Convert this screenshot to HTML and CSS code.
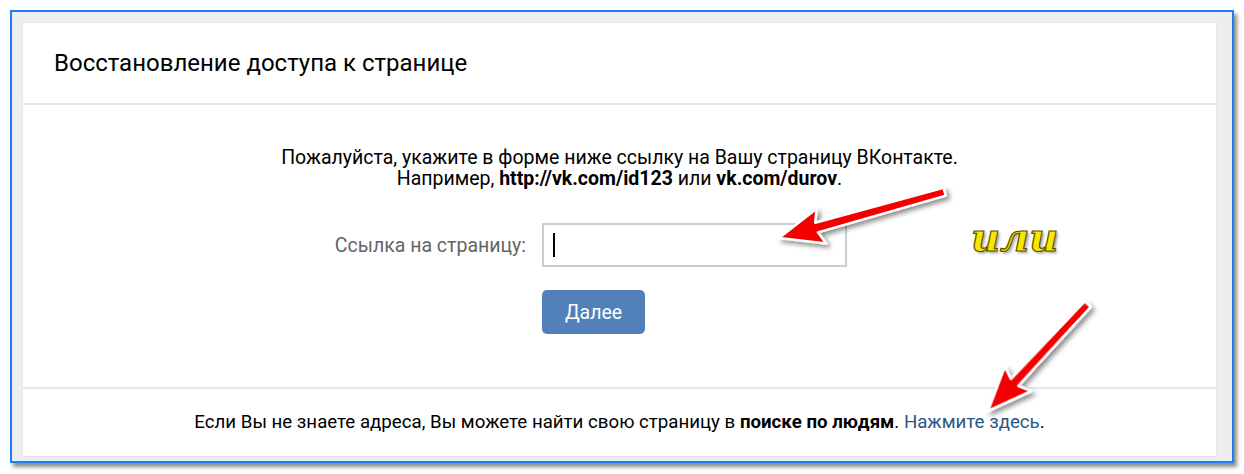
FILE: index.html
```html
<!DOCTYPE html>
<html lang="ru">
<head>
<meta charset="utf-8">
<link rel="stylesheet" href="styles.css">
</head>
<body>
<div class="page">
  <div class="frame">
    <div class="card">
      <div class="card-head">Восстановление доступа к странице</div>
      <div class="card-body">
        <p class="intro">Пожалуйста, укажите в форме ниже ссылку на Вашу страницу ВКонтакте.<br>Например, <b>http://vk.com/id123</b> или <b>vk.com/durov</b>.</p>
        <div class="form">
          <label class="label">Ссылка на страницу:</label>
          <div class="input"><span class="caret"></span></div>
          <div class="btn-cell"><button class="btn">Далее</button></div>
        </div>
      </div>
      <div class="card-foot">Если Вы не знаете адреса, Вы можете найти свою страницу в&nbsp;<b>поиске по людям</b>.&nbsp;<a class="link">Нажмите здесь</a>.</div>
    </div>
  </div>
  <div class="ili">или</div>
  <svg class="arrows" width="1244" height="474" viewBox="0 0 1244 474">
    <defs>
      <filter id="sh" x="-20%" y="-20%" width="140%" height="140%">
        <feDropShadow dx="3" dy="3" stdDeviation="2.5" flood-color="#000" flood-opacity="0.45"/>
      </filter>
    </defs>
    <g filter="url(#sh)">
      <polygon transform="translate(779,238) rotate(-15.6)" points="0,0 44,-18 39,-5 172,-4 172,4 39,5 44,18" fill="#f40000" stroke="#fff" stroke-width="2.5" stroke-linejoin="round"/>
      <polygon transform="translate(988,411) rotate(-47)" points="0,0 44,-18 39,-5 146,-4 146,4 39,5 44,18" fill="#f40000" stroke="#fff" stroke-width="2.5" stroke-linejoin="round"/>
    </g>
  </svg>
</div>
</body>
</html>
```
FILE: styles.css
```css
* { box-sizing: border-box; }
html, body { margin: 0; padding: 0; background: #fff; }
body { font-family: Roboto, "Liberation Sans", sans-serif; width: 1244px; height: 474px; overflow: hidden; }
.page { position: relative; width: 1244px; height: 474px; padding: 10px 10px 0 10px; }
.frame {
  width: 1224px; height: 453px;
  border: 2px solid #1a80f2;
  background: #edeef0;
  padding: 11px 16px 5px 11px;
  box-shadow: 3px 4px 4px rgba(0,0,0,0.45);
}
.card {
  height: 100%;
  background: #fff;
  box-shadow: 0 1px 0 #dcdee3, 0 0 0 1px #e6e7eb;
  display: flex; flex-direction: column;
}
.card-head {
  height: 82px;
  padding: 26px 0 0 31px;
  font-size: 24px; line-height: 28px; color: #000;
  border-bottom: 2px solid #e7e8ec;
}
.card-body { flex: 1; display: flex; flex-direction: column; padding-top: 42px; }
.intro { margin: 0; text-align: center; font-size: 19.5px; line-height: 21px; color: #000; }
.intro b { font-weight: 700; }
.form {
  display: grid;
  grid-template-columns: 503px 305px;
  column-gap: 16px;
  row-gap: 23px;
  align-items: center;
  margin-top: 34px;
}
.label { font-size: 19.5px; color: #656565; text-align: right; }
.input { width: 305px; height: 44px; border: 2px solid #c8ced6; background: #fff; display: flex; align-items: center; padding-left: 9px; }
.caret { width: 2px; height: 24px; background: #000; }
.btn-cell { grid-column: 2; display: flex; }
.btn {
  width: 103px; height: 44px; border: 0; border-radius: 5px;
  background: #5181b8; color: #fff;
  font-family: Roboto, "Liberation Sans", sans-serif; font-size: 19.5px; font-weight: 400;
}
.card-foot {
  height: 69px; border-top: 2px solid #e7e8ec;
  display: flex; align-items: center; justify-content: center;
  font-size: 18.7px; color: #000; padding-bottom: 1px;
}
.card-foot b { font-weight: 700; }
.link { color: #2a5885; }
.arrows { position: absolute; left: 0; top: 0; pointer-events: none; }
.ili {
  position: absolute; left: 971px; top: 217px;
  font-family: "DejaVu Serif", serif; font-weight: 700; font-style: italic;
  font-size: 40px; line-height: 40px; color: #f8e800;
  -webkit-text-stroke: 1.2px #5e5000;
  text-shadow: 2px 2px 3px rgba(0,0,0,0.4);
}
```
